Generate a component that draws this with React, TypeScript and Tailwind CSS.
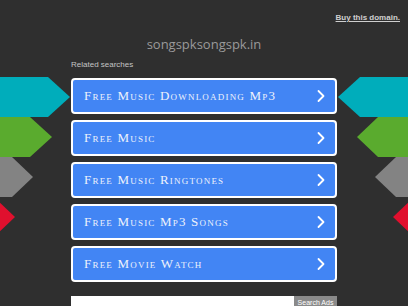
import React from 'react';

const searches = [
  'Free Music Downloading Mp3',
  'Free Music',
  'Free Music Ringtones',
  'Free Music Mp3 Songs',
  'Free Movie Watch',
];

const Chevron: React.FC = () => (
  <svg width="10" height="14" viewBox="0 0 10 14" fill="none">
    <path d="M2.5 2 L7.5 7 L2.5 12" stroke="white" strokeWidth="1.8" strokeLinecap="round" strokeLinejoin="round" />
  </svg>
);

const App: React.FC = () => {
  return (
    <div className="relative w-[408px] h-[306px] overflow-hidden bg-[#2f2f2f] font-['Liberation_Sans',sans-serif]">
      {/* side decorations */}
      <svg className="absolute left-0 top-[77px]" width="72" height="160" viewBox="0 0 72 160">
        <polygon points="0,0 48,0 70,20 48,40 0,40" fill="#00adbb" />
        <polygon points="0,40 30,40 52,60 30,80 0,80" fill="#5aab2e" />
        <polygon points="0,80 12,80 33,100 12,120 0,120" fill="#838383" />
        <polygon points="0,125.7 15,140 0,154.3" fill="#e0102e" />
      </svg>
      <svg className="absolute right-0 top-[77px]" width="72" height="160" viewBox="0 0 72 160">
        <polygon points="2,20 24,0 72,0 72,40 24,40" fill="#00adbb" />
        <polygon points="21,60 42,40 72,40 72,80 42,80" fill="#5aab2e" />
        <polygon points="39,100 60,80 72,80 72,120 60,120" fill="#838383" />
        <polygon points="57,140 72,125.7 72,154.3" fill="#e0102e" />
      </svg>

      <div className="flex justify-end pt-[12px] pr-[8px]">
        <a className="text-[8px] font-bold text-[#cfcfcf] underline">Buy this domain.</a>
      </div>

      <div className="mt-[11px] text-center text-[13px] text-[#9a9a9a] font-['Open_Sans',sans-serif] leading-[18px]">
        songspksongspk.in
      </div>

      <div className="ml-[71px] w-[266px] mt-[6px]">
        <div className="text-[8px] text-[#c4c4c4] leading-[12px]">Related searches</div>
        <div className="mt-[7px] flex flex-col gap-[6px]">
          {searches.map((s) => (
            <div
              key={s}
              className="flex items-center justify-between h-[36px] rounded-[4px] border-2 border-white bg-[#4285f4] pl-[11px] pr-[9px]"
            >
              <span className="font-['Liberation_Serif',serif] text-[13px] tracking-[1.2px] text-[#eef2fb] [font-variant:small-caps]">
                {s}
              </span>
              <Chevron />
            </div>
          ))}
        </div>
        <div className="mt-[14px] flex h-[14px]">
          <div className="flex-1 bg-white" />
          <div className="w-[43px] bg-[#8a8a8a] text-[7px] text-white flex items-center justify-center">Search Ads</div>
        </div>
      </div>
    </div>
  );
};

export default App;
